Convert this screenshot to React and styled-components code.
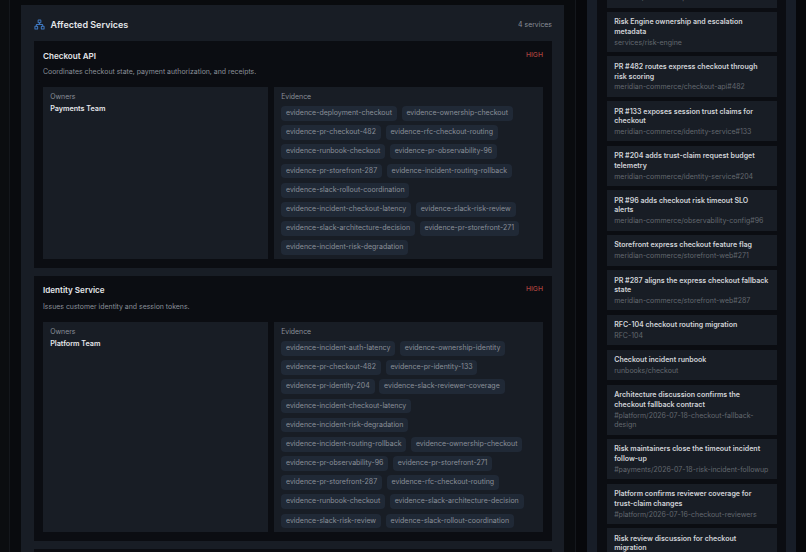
import React from 'react';
import styled, { createGlobalStyle } from 'styled-components';
import { Network } from 'lucide-react';

const GlobalStyle = createGlobalStyle`
  html, body { margin: 0; padding: 0; height: 100%; overflow: hidden; background: #090b0e; }
  #root { height: 100%; }
  * { box-sizing: border-box; }
`;

const Shell = styled.div`
  width: 806px; height: 552px; overflow: hidden; opacity: 0.999;
  display: flex; align-items: flex-start;
  font-family: Inter, "Liberation Sans", sans-serif;
  background: #090b0e;
`;
const Rail = styled.div`
  width: 10px; height: 552px; flex-shrink: 0;
  background: #0b0d10; border-right: 1px solid #14171c;
`;
const MainColumn = styled.main`
  width: 566px; height: 552px; flex-shrink: 0; overflow: hidden;
  padding: 5px 11px 0; background: #090b0e; border-right: 1px solid #14171c;
`;
const Panel = styled.section`
  background: #181d25; padding: 10px 12px 12px 13px;
  display: flex; flex-direction: column; gap: 8px;
`;
const PanelHeader = styled.div`
  display: flex; align-items: center; justify-content: space-between;
  height: 18px;
`;
const PanelTitle = styled.h2`
  display: flex; align-items: center; gap: 5.5px;
  margin: 0; font-size: 9px; font-weight: 600; color: #e4e6ea;
  svg { color: #3f78c0; }
`;
const Count = styled.span` font-size: 6.9px; color: #8a8f98; `;
const ServiceCard = styled.article`
  background: #0b0d12; padding: 8.5px 9px 9px;
`;
const ServiceTop = styled.div`
  display: flex; align-items: flex-start; justify-content: space-between;
`;
const ServiceName = styled.h3`
  margin: 0; font-size: 8.1px; line-height: 12px; font-weight: 600; color: #e4e6ea;
`;
const Risk = styled.span`
  font-size: 6.8px; line-height: 10px; font-weight: 500; color: #a8433f;
`;
const ServiceDesc = styled.p`
  margin: 5.8px 0 0; font-size: 6.93px; line-height: 10.5px; color: #8a8f98;
`;
const ServiceBody = styled.div`
  display: grid; grid-template-columns: 225px 269px; gap: 6px; margin-top: 8.9px;
`;
const Box = styled.div`
  background: #181d25; padding: 5.8px 7.2px 3.8px;
`;
const BoxLabel = styled.div` font-size: 6.9px; line-height: 10px; color: #8a8f98; `;
const OwnerName = styled.div`
  margin-top: 1.2px; font-size: 7.2px; line-height: 10.5px; font-weight: 600; color: #e4e6ea;
`;
const Tags = styled.div`
  display: flex; flex-wrap: wrap; gap: 4.5px 4.8px; margin-top: 3.6px;
`;
const Tag = styled.span`
  display: block; height: 14.7px; padding: 0 4.8px; border-radius: 4px;
  background: #202936; color: #8a8f98; font-size: 7px; line-height: 14.7px; white-space: nowrap;
`;
const Sidebar = styled.aside`
  width: 230px; height: 552px; flex-shrink: 0; overflow: hidden;
  padding: 0 10px 0 11px; background: #07080b;
`;
const SidePanel = styled.div`
  height: 552px; overflow: hidden; padding: 0 10px; background: #171d27;
`;
const SourceList = styled.div`
  background: #0b0d12; min-height: 600px; padding: 0 9px 0 10px; margin-top: -23.2px;
  display: flex; flex-direction: column; gap: 4.25px;
`;
const SourceCard = styled.div`
  background: #181d25; padding: 5.5px 8.4px 4.8px 7.2px;
`;
const SourceTitle = styled.div`
  font-size: 7.05px; line-height: 9.6px; font-weight: 600; color: #d0d3d8;
`;
const SourceRef = styled.div`
  margin-top: 1.3px; font-size: 7px; line-height: 9.6px; color: #63686f;
`;

const services = [
  {
    name: 'Checkout API',
    desc: 'Coordinates checkout state, payment authorization, and receipts.',
    owner: 'Payments Team',
    tags: ['deployment-checkout', 'ownership-checkout', 'pr-checkout-482', 'rfc-checkout-routing', 'runbook-checkout', 'pr-observability-96', 'pr-storefront-287', 'incident-routing-rollback', 'slack-rollout-coordination', 'incident-checkout-latency', 'slack-risk-review', 'slack-architecture-decision', 'pr-storefront-271', 'incident-risk-degradation'],
  },
  {
    name: 'Identity Service',
    desc: 'Issues customer identity and session tokens.',
    owner: 'Platform Team',
    tags: ['incident-auth-latency', 'ownership-identity', 'pr-checkout-482', 'pr-identity-133', 'pr-identity-204', 'slack-reviewer-coverage', 'incident-checkout-latency', 'incident-risk-degradation', 'incident-routing-rollback', 'ownership-checkout', 'pr-observability-96', 'pr-storefront-271', 'pr-storefront-287', 'rfc-checkout-routing', 'runbook-checkout', 'slack-architecture-decision', 'slack-risk-review', 'slack-rollout-coordination'],
  },
];

const sources = [
  ['Checkout API ownership metadata', 'services/checkout-api'],
  ['Risk Engine ownership and escalation metadata', 'services/risk-engine'],
  ['PR #482 routes express checkout through risk scoring', 'meridian-commerce/checkout-api#482'],
  ['PR #133 exposes session trust claims for checkout', 'meridian-commerce/identity-service#133'],
  ['PR #204 adds trust-claim request budget telemetry', 'meridian-commerce/identity-service#204'],
  ['PR #96 adds checkout risk timeout SLO alerts', 'meridian-commerce/observability-config#96'],
  ['Storefront express checkout feature flag', 'meridian-commerce/storefront-web#271'],
  ['PR #287 aligns the express checkout fallback state', 'meridian-commerce/storefront-web#287'],
  ['RFC-104 checkout routing migration', 'RFC-104'],
  ['Checkout incident runbook', 'runbooks/checkout'],
  ['Architecture discussion confirms the checkout fallback contract', '#platform/2026-07-18-checkout-fallback-design'],
  ['Risk maintainers close the timeout incident follow-up', '#payments/2026-07-18-risk-incident-followup'],
  ['Platform confirms reviewer coverage for trust-claim changes', '#platform/2026-07-16-checkout-reviewers'],
  ['Risk review discussion for checkout migration', '#risk/2026-07-17-checkout-review'],
];

export default function App() {
  return (
    <Shell>
      <GlobalStyle />
      <Rail />
      <MainColumn>
        <Panel>
          <PanelHeader>
            <PanelTitle><Network size={11} strokeWidth={2.2} />Affected Services</PanelTitle>
            <Count>4 services</Count>
          </PanelHeader>
          {services.map((s) => (
            <ServiceCard key={s.name}>
              <ServiceTop>
                <ServiceName>{s.name}</ServiceName>
                <Risk>HIGH</Risk>
              </ServiceTop>
              <ServiceDesc>{s.desc}</ServiceDesc>
              <ServiceBody>
                <Box>
                  <BoxLabel>Owners</BoxLabel>
                  <OwnerName>{s.owner}</OwnerName>
                </Box>
                <Box>
                  <BoxLabel>Evidence</BoxLabel>
                  <Tags>
                    {s.tags.map((t) => <Tag key={t}>evidence-{t}</Tag>)}
                  </Tags>
                </Box>
              </ServiceBody>
            </ServiceCard>
          ))}
          <ServiceCard />
        </Panel>
      </MainColumn>
      <Sidebar>
        <SidePanel>
          <SourceList>
            {sources.map(([title, ref]) => (
              <SourceCard key={title}>
                <SourceTitle>{title}</SourceTitle>
                <SourceRef>{ref}</SourceRef>
              </SourceCard>
            ))}
          </SourceList>
        </SidePanel>
      </Sidebar>
    </Shell>
  );
}
